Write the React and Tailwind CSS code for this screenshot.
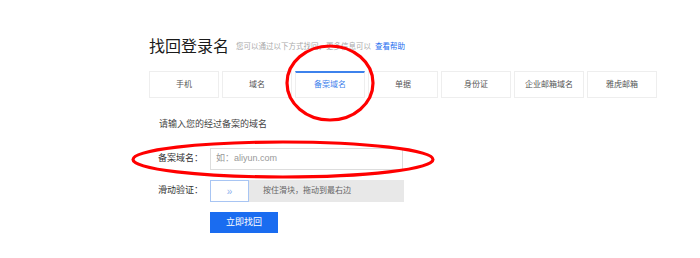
import React from "react";

const tabs = ["手机", "域名", "备案域名", "单据", "身份证", "企业邮箱域名", "雅虎邮箱"];

export default function App() {
  return (
    <div
      className="relative w-[700px] h-[258px] bg-white overflow-hidden"
      style={{ fontFamily: '"Liberation Sans", "Noto Sans CJK SC", sans-serif' }}
    >
      <div className="pl-[149px] pt-[36px]">
        <div className="flex items-center h-[22px]">
          <span className="text-[16px] leading-[22px] text-[#1a1a1a]">找回登录名</span>
          <span className="ml-[7px] text-[7.5px] leading-[10px] text-[#aaa]">
            您可以通过以下方式找回，更多信息可以
          </span>
          <span className="ml-[4px] text-[7.5px] leading-[10px] text-[#1a6ef0]">查看帮助</span>
        </div>

        <div className="flex gap-[3px] mt-[13px]">
          {tabs.map((t, i) =>
            i === 2 ? (
              <div
                key={t}
                className="w-[70px] h-[27px] border border-[#eeeeee] border-t-2 border-t-[#3d82ec] flex items-center justify-center text-[8px] text-[#3d82ec]"
              >
                {t}
              </div>
            ) : (
              <div
                key={t}
                className="w-[70px] h-[27px] border border-[#eeeeee] flex items-center justify-center text-[8px] text-[#555]"
              >
                {t}
              </div>
            )
          )}
        </div>

        <div className="pl-[10px] mt-[20px] text-[9px] leading-[12px] text-[#444]">请输入您的经过备案的域名</div>

        <div className="flex items-center mt-[18px] pl-[9px]">
          <div className="w-[52px] text-[9px] text-[#333]">备案域名：</div>
          <div className="w-[193px] h-[22px] border border-[#dddddd] flex items-center pl-[5px] text-[9px] text-[#999]">
            如：aliyun.com
          </div>
        </div>

        <div className="flex items-center mt-[10px] pl-[9px]">
          <div className="w-[52px] text-[9px] text-[#333]">滑动验证：</div>
          <div className="flex h-[22px] w-[194px]">
            <div className="w-[39px] h-[22px] border border-[#a8c5f3] bg-white flex items-center justify-center text-[10px] text-[#8fb3ee]">
              »
            </div>
            <div className="flex-1 h-[22px] bg-[#e8e8e8] flex items-center pl-[14px] text-[8px] text-[#666]">
              按住滑块，拖动到最右边
            </div>
          </div>
        </div>

        <div className="mt-[10px] pl-[61px]">
          <div className="w-[68px] h-[21px] bg-[#1a6cf0] flex items-center justify-center text-[9px] text-white">
            立即找回
          </div>
        </div>
      </div>

      <svg className="absolute left-0 top-0 pointer-events-none" width="700" height="258">
        <ellipse cx="330" cy="83" rx="43" ry="37" fill="none" stroke="#ff0000" strokeWidth="3.2" />
        <ellipse cx="283" cy="159.5" rx="150" ry="17.5" fill="none" stroke="#ff0000" strokeWidth="3.2" />
      </svg>
    </div>
  );
}
